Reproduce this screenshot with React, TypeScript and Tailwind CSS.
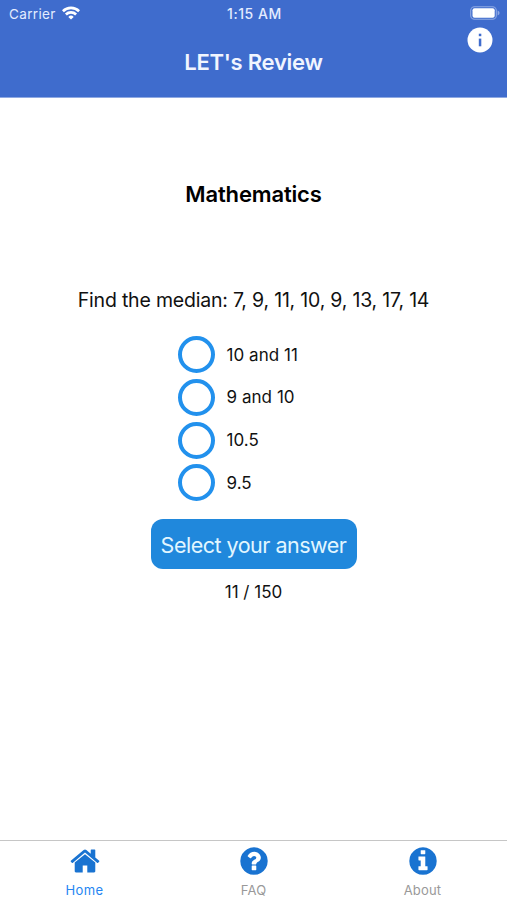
import { useState } from "react";

const HOME =
  "M1472 992v480q0 26-19 45t-45 19h-384v-384h-256v384h-384q-26 0-45-19t-19-45v-480q0-1 .5-3t.5-3l575-474 575 474q1 2 1 6zm223-69l-62 74q-8 9-21 11h-3q-13 0-21-7l-692-577-692 577q-12 8-24 7-13-2-21-11l-62-74q-8-10-7-23.5t11-21.5l719-599q32-26 76-26t76 26l244 204v-195q0-14 9-23t23-9h192q14 0 23 9t9 23v408l219 182q10 8 11 21.5t-7 23.5z";
const QUESTION =
  "M1024 1376v-192q0-14-9-23t-23-9h-192q-14 0-23 9t-9 23v192q0 14 9 23t23 9h192q14 0 23-9t9-23zm256-672q0-88-55.5-163t-138.5-116-170-41q-243 0-371 213-15 24 8 42l132 100q7 6 19 6 16 0 25-12 53-68 86-92 34-24 86-24 48 0 85.5 26t37.5 59q0 38-20 61t-68 45q-63 28-115.5 86.5t-52.5 125.5v36q0 14 9 23t23 9h192q14 0 23-9t9-23q0-19 21.5-49.5t54.5-49.5q32-18 49-28.5t46-35 44.5-48 28-60.5 12.5-81zm384 192q0 209-103 385.5t-279.5 279.5-385.5 103-385.5-103-279.5-279.5-103-385.5 103-385.5 279.5-279.5 385.5-103 385.5 103 279.5 279.5 103 385.5z";
const INFO =
  "M1152 1376v-160q0-14-9-23t-23-9h-96v-512q0-14-9-23t-23-9h-320q-14 0-23 9t-9 23v160q0 14 9 23t23 9h96v320h-96q-14 0-23 9t-9 23v160q0 14 9 23t23 9h448q14 0 23-9t9-23zm-128-896v-160q0-14-9-23t-23-9h-192q-14 0-23 9t-9 23v160q0 14 9 23t23 9h192q14 0 23-9t9-23zm640 416q0 209-103 385.5t-279.5 279.5-385.5 103-385.5-103-279.5-279.5-103-385.5 103-385.5 279.5-279.5 385.5-103 385.5 103 279.5 279.5 103 385.5z";

const TABS = [
  { label: "Home", path: HOME },
  { label: "FAQ", path: QUESTION },
  { label: "About", path: INFO },
];

const ANSWERS = ["10 and 11", "9 and 10", "10.5", "9.5"];

function StatusBar() {
  return (
    <div className="grid h-[27px] grid-cols-3 items-center pr-[7px] pl-[9px] text-[13.5px] text-[#e4ecff]">
      <div className="flex items-center gap-[6px]">
        <span className="pt-px tracking-[0.35px]">Carrier</span>
        <svg viewBox="0 0 18 14" className="-mt-px h-[14px] w-[18px]" fill="none" stroke="#fff" strokeWidth="2.7">
          <path d="M0.9 5.2a11.6 11.6 0 0 1 16.2 0" />
          <path d="M3.9 8.5a7.3 7.3 0 0 1 10.2 0" />
          <path d="M9 13.6 6.3 10.9a3.9 3.9 0 0 1 5.4 0Z" fill="#fff" stroke="none" />
        </svg>
      </div>
      <span className="text-center text-[14px] font-medium tracking-[0.55px]">1:15 AM</span>
      <svg viewBox="0 0 30 14" className="-mt-px h-[14px] w-[30px] justify-self-end">
        <rect x="0.7" y="0.7" width="25.6" height="12.6" rx="3.8" fill="none" stroke="#8fa9e4" strokeWidth="1.1" />
        <rect x="2.5" y="2.3" width="22.2" height="9.4" rx="2" fill="#fff" />
        <path d="M27.6 4.6c1.2.4 1.9 1.3 1.9 2.4s-.7 2-1.9 2.4Z" fill="#8fa9e4" />
      </svg>
    </div>
  );
}

export default function App() {
  const [selected, setSelected] = useState<number | null>(null);

  return (
    <div className="flex h-[900px] w-[507px] flex-col bg-white font-[Inter,'Liberation_Sans',sans-serif] text-black">
      <header className="relative h-[98px] shrink-0 border-b border-[#8fa9e2] bg-[#3f6ccd]">
        <StatusBar />
        <h1 className="mt-[20px] text-center text-[22px] leading-[30px] font-semibold tracking-[-0.25px] text-[#f1f5ff]">
          LET's Review
        </h1>
        <button aria-label="Information" className="absolute top-[27px] right-[14px] size-[26px]">
          <svg viewBox="0 0 26 26" className="size-[26px]">
            <circle cx="13" cy="13" r="12.5" fill="#fff" />
            <rect x="11.8" y="6.7" width="2.5" height="2.5" fill="#3f6ccd" />
            <rect x="11.8" y="11.6" width="2.5" height="7.7" fill="#3f6ccd" />
          </svg>
        </button>
      </header>

      <main className="flex flex-1 flex-col items-center">
        <h2 className="mt-[81px] text-[22px] leading-[30px] font-semibold tracking-[-0.15px]">Mathematics</h2>
        <p className="mt-[77px] text-[19.5px] leading-[28px] tracking-[-0.2px] whitespace-nowrap text-[#111]">
          Find the median: 7, 9, 11, 10, 9, 13, 17, 14
        </p>
        <div className="mt-[22px] flex w-[152px] flex-col gap-[6px]">
          {ANSWERS.map((answer, i) => (
            <button
              key={answer}
              onClick={() => setSelected(i)}
              className="flex h-[36.8px] items-center gap-[12px] text-[17px] tracking-[0.05px] whitespace-nowrap text-[#111]"
            >
              <span className="flex size-[37px] shrink-0 items-center justify-center rounded-full border-4 border-[#2291ed]">
                {selected === i && <span className="size-[20px] rounded-full bg-[#2291ed]" />}
              </span>
              <span className="pt-[2px]">{answer}</span>
            </button>
          ))}
        </div>
        <button className="mt-[17.8px] h-[50px] w-[206px] rounded-[12px] bg-[#2088dc] pt-[2px] text-[21.5px] tracking-[-0.5px] whitespace-nowrap text-[#e2f6ff]">
          Select your answer
        </button>
        <p className="mt-[11px] text-[17px] leading-[24px] text-[#111]">11 / 150</p>
      </main>

      <nav className="grid h-[60px] shrink-0 grid-cols-3 border-t border-[#c6c6c6]">
        {TABS.map((tab, i) => (
          <button key={tab.label} className="flex flex-col items-center pt-[4px]">
            <svg viewBox="0 0 1792 1792" className="size-[32px] fill-[#1973d1]">
              <path d={tab.path} />
            </svg>
            <span
              className={
                i === 0
                  ? "mt-[4px] text-[13px] leading-[18px] tracking-[0.4px] text-[#2586f2]"
                  : "mt-[4px] text-[13px] leading-[18px] tracking-[0.2px] text-[#999]"
              }
            >
              {tab.label}
            </span>
          </button>
        ))}
      </nav>
    </div>
  );
}
